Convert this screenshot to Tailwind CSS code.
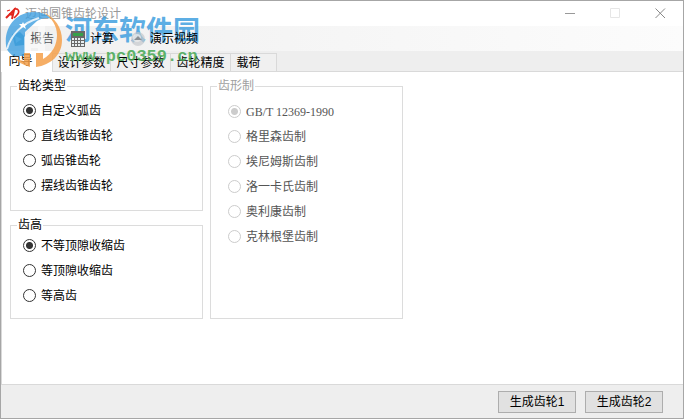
<!DOCTYPE html>
<html lang="zh-CN">
    <head>
        <meta charset="utf-8">
        <title>迈迪圆锥齿轮设计</title>
        <meta name="viewport" content="initial-scale=1, width=device-width">
        <script src="https://cdn.jsdelivr.net/npm/@tailwindcss/browser@4"></script>
    </head>
    <body class="h-screen overflow-hidden font-['Liberation_Sans','Noto_Sans_CJK_SC',sans-serif] text-[12px] leading-4 text-black">
        <div class="relative flex h-full flex-col border border-[#a6a6a6] bg-[#eeeeee]">
            <!-- title bar -->
            <header class="flex h-[25px] shrink-0 items-center bg-white pl-1">
                <svg class="h-4 w-4" viewBox="0 0 16 16" fill="none" stroke="#e0241c" stroke-width="2">
                    <path d="M1 12L9 4L7 13M4 8L8 9"/>
                    <path d="M9 3C14 2 15 6 12 9L9 12" stroke-width="1.6"/>
                    <path d="M2 5L5 4" stroke-width="1.2"/>
                </svg>
                <h1 class="ml-1 flex-1 text-[#999999]">迈迪圆锥齿轮设计</h1>
                <button class="flex h-full w-[45px] items-center justify-center" aria-label="最小化">
                    <svg class="h-[11px] w-[11px]" viewBox="0 0 11 11" stroke="#999999"><path d="M0 5.5H10"/></svg>
                </button>
                <button class="flex h-full w-[45px] items-center justify-center" aria-label="最大化" disabled>
                    <svg class="h-[11px] w-[11px]" viewBox="0 0 11 11" fill="none" stroke="#e6e6e6"><path d="M.5 .5H9.5V9.5H.5Z"/></svg>
                </button>
                <button class="flex h-full w-[45px] items-center justify-center" aria-label="关闭">
                    <svg class="h-[11px] w-[11px]" viewBox="0 0 11 11" stroke="#888888"><path d="M.5 .5L10 10M10 .5L.5 10"/></svg>
                </button>
            </header>

            <!-- toolbar -->
            <nav class="flex h-[25px] shrink-0 items-center bg-linear-to-r from-[#f0f0f0] to-[#fcfcfc] pl-[9px]">
                <button class="flex items-center gap-1 text-[#555555]">
                    <svg class="h-4 w-4" viewBox="0 0 16 16"><path d="M2 3L10 1L14 5V14L5 15Z" fill="#4b9fc4"/><path d="M5 5L12 8L6 12Z" fill="#8fd0ea"/></svg>
                    报告
                </button>
                <button class="relative z-10 ml-4 flex items-center gap-1">
                    <svg class="h-4 w-4" viewBox="0 0 16 16">
                        <path d="M1 0H15V16H1Z" fill="#686868"/>
                        <path d="M3 2H13V5H3Z" fill="#35a04a"/>
                        <path d="M2 7h2v2H2zM5 7h2v2H5zM8 7h2v2H8zM11 7h3v2h-3zM2 10h2v2H2zM5 10h2v2H5zM8 10h2v2H8zM11 10h3v2h-3zM2 13h2v2H2zM5 13h2v2H5zM8 13h2v2H8zM11 13h3v2h-3z" fill="#e8eef0"/>
                    </svg>
                    计算
                </button>
                <button class="relative z-10 ml-4 flex items-center gap-1">
                    <svg class="h-4 w-4" viewBox="0 0 16 16"><circle cx="8" cy="8" r="7" fill="#c4c8cc" fill-opacity=".7"/><circle cx="7" cy="7" r="4" fill="#eeeeee" fill-opacity=".7"/><path d="M4 9L8 5L12 9Z" fill="#8a8f94"/></svg>
                    演示视频
                </button>
            </nav>

            <!-- tabs -->
            <div class="flex h-[21px] shrink-0 items-end border-b border-[#d9d9d9]" role="tablist">
                <button role="tab" aria-selected="true" class="-mb-px h-[21px] w-[51px] bg-white pr-3 pb-[2px]">向导</button>
                <button role="tab" class="h-[18px] w-[59px] border-x border-t border-[#d9d9d9] bg-[#f0f0f0]">设计参数</button>
                <button role="tab" class="h-[18px] w-[60px] border-t border-r border-[#d9d9d9] bg-[#f0f0f0]">尺寸参数</button>
                <button role="tab" class="h-[18px] w-[60px] border-t border-r border-[#d9d9d9] bg-[#f0f0f0]">齿轮精度</button>
                <button role="tab" class="h-[18px] w-[46px] border-t border-r border-[#d9d9d9] bg-[#f0f0f0] pr-[10px]">载荷</button>
            </div>

            <main class="flex flex-1 items-start gap-[7px] border-b border-l border-[#d9d9d9] bg-white pt-[6px] pl-2">
                <div class="flex w-[193px] flex-col gap-[6px]">
                    <fieldset class="border border-[#dcdcdc] pt-1 pb-3 pl-3">
                        <legend class="-ml-[6px] px-px">齿轮类型</legend>
                        <label class="flex h-[25px] items-center gap-[5px]">
                            <input type="radio" name="type" checked class="h-[13px] w-[13px] appearance-none rounded-full border border-[#333333] bg-white bg-radial from-[#333333] from-[3px] to-white to-[4px]">自定义弧齿
                        </label>
                        <label class="flex h-[25px] items-center gap-[5px]">
                            <input type="radio" name="type" class="h-[13px] w-[13px] appearance-none rounded-full border border-[#333333] bg-white">直线齿锥齿轮
                        </label>
                        <label class="flex h-[25px] items-center gap-[5px]">
                            <input type="radio" name="type" class="h-[13px] w-[13px] appearance-none rounded-full border border-[#333333] bg-white">弧齿锥齿轮
                        </label>
                        <label class="flex h-[25px] items-center gap-[5px]">
                            <input type="radio" name="type" class="h-[13px] w-[13px] appearance-none rounded-full border border-[#333333] bg-white">摆线齿锥齿轮
                        </label>
                    </fieldset>
                    <fieldset class="border border-[#dcdcdc] pb-[10px] pl-3">
                        <legend class="-ml-[6px] px-px">齿高</legend>
                        <label class="flex h-[25px] items-center gap-[5px]">
                            <input type="radio" name="height" checked class="h-[13px] w-[13px] appearance-none rounded-full border border-[#333333] bg-white bg-radial from-[#333333] from-[3px] to-white to-[4px]">不等顶隙收缩齿
                        </label>
                        <label class="flex h-[25px] items-center gap-[5px]">
                            <input type="radio" name="height" class="h-[13px] w-[13px] appearance-none rounded-full border border-[#333333] bg-white">等顶隙收缩齿
                        </label>
                        <label class="flex h-[25px] items-center gap-[5px]">
                            <input type="radio" name="height" class="h-[13px] w-[13px] appearance-none rounded-full border border-[#333333] bg-white">等高齿
                        </label>
                    </fieldset>
                </div>
                <fieldset disabled class="w-[193px] self-start border border-[#dcdcdc] pt-[5px] pb-[69px] pl-[17px] text-[#555555]">
                    <legend class="-ml-[11px] px-px text-[#a0a0a0]">齿形制</legend>
                    <label class="flex h-[25px] items-center gap-[5px] font-['Liberation_Serif',serif]">
                        <input type="radio" name="system" checked class="h-[13px] w-[13px] appearance-none rounded-full border border-[#cccccc] bg-white bg-radial from-[#cccccc] from-[3px] to-white to-[4px]">GB/T 12369-1990
                    </label>
                    <label class="flex h-[25px] items-center gap-[5px]">
                        <input type="radio" name="system" class="h-[13px] w-[13px] appearance-none rounded-full border border-[#cccccc] bg-white">格里森齿制
                    </label>
                    <label class="flex h-[25px] items-center gap-[5px]">
                        <input type="radio" name="system" class="h-[13px] w-[13px] appearance-none rounded-full border border-[#cccccc] bg-white">埃尼姆斯齿制
                    </label>
                    <label class="flex h-[25px] items-center gap-[5px]">
                        <input type="radio" name="system" class="h-[13px] w-[13px] appearance-none rounded-full border border-[#cccccc] bg-white">洛一卡氏齿制
                    </label>
                    <label class="flex h-[25px] items-center gap-[5px]">
                        <input type="radio" name="system" class="h-[13px] w-[13px] appearance-none rounded-full border border-[#cccccc] bg-white">奥利康齿制
                    </label>
                    <label class="flex h-[25px] items-center gap-[5px]">
                        <input type="radio" name="system" class="h-[13px] w-[13px] appearance-none rounded-full border border-[#cccccc] bg-white">克林根堡齿制
                    </label>
                </fieldset>
            </main>

            <footer class="flex h-[33px] shrink-0 items-center justify-end gap-[9px] pr-5">
                <button class="h-[22px] w-[78px] border border-[#adadad] bg-[#e1e1e1]">生成齿轮1</button>
                <button class="h-[22px] w-[78px] border border-[#adadad] bg-[#e1e1e1]">生成齿轮2</button>
            </footer>

            <!-- site stamp over the window -->
            <div class="pointer-events-none absolute top-[10px] left-1 flex items-start gap-[3px]">
                <svg class="h-[57px] w-[57px]" viewBox="0 0 57 57">
                    <!-- blue half of the globe -->
                    <path d="M1 34C-1 15 12 1 29 1C37 1 43 4 47 8C42 6 37 7 32 10L20 21V45H8C4 42 1 38 1 34Z" fill="#3f9fe0" fill-opacity=".8"/>
                    <!-- orange swoosh and pillars -->
                    <path d="M39 2C50 6 57 17 57 29C57 44 46 54 31 56V42H38V48C47 43 52 34 52 24C52 15 47 7 39 2Z" fill="#f5a04a" fill-opacity=".85"/>
                    <path d="M8 46C13 51 18 54 25 56V42H19V50C14 49 11 48 8 46Z" fill="#f5a04a" fill-opacity=".85"/>
                    <!-- white towers and orbit line -->
                    <path d="M19 26L26 20V31H33V16L40 12V42H33V37H26V42H19Z" fill="#ffffff" fill-opacity=".5"/>
                    <path d="M2 38C6 24 17 12 34 7" fill="none" stroke="#ffffff" stroke-opacity=".8" stroke-width="2"/>
                    <path d="M18 11L19 13L22 13L20 15L21 18L18 16L15 18L16 15L14 13L17 13Z" fill="#ffffff"/>
                </svg>
                <div class="flex flex-col pt-[2px]">
                    <span class="font-['Noto_Sans_CJK_SC',sans-serif] text-[27px] leading-8 font-bold text-[#3f9fe0]/85">河东软件园</span>
                    <span class="font-['Liberation_Mono',monospace] text-[17px] leading-6 font-bold text-[#45a852]/85">www.pc0359.cn</span>
                </div>
            </div>
        </div>
    </body>
</html>
